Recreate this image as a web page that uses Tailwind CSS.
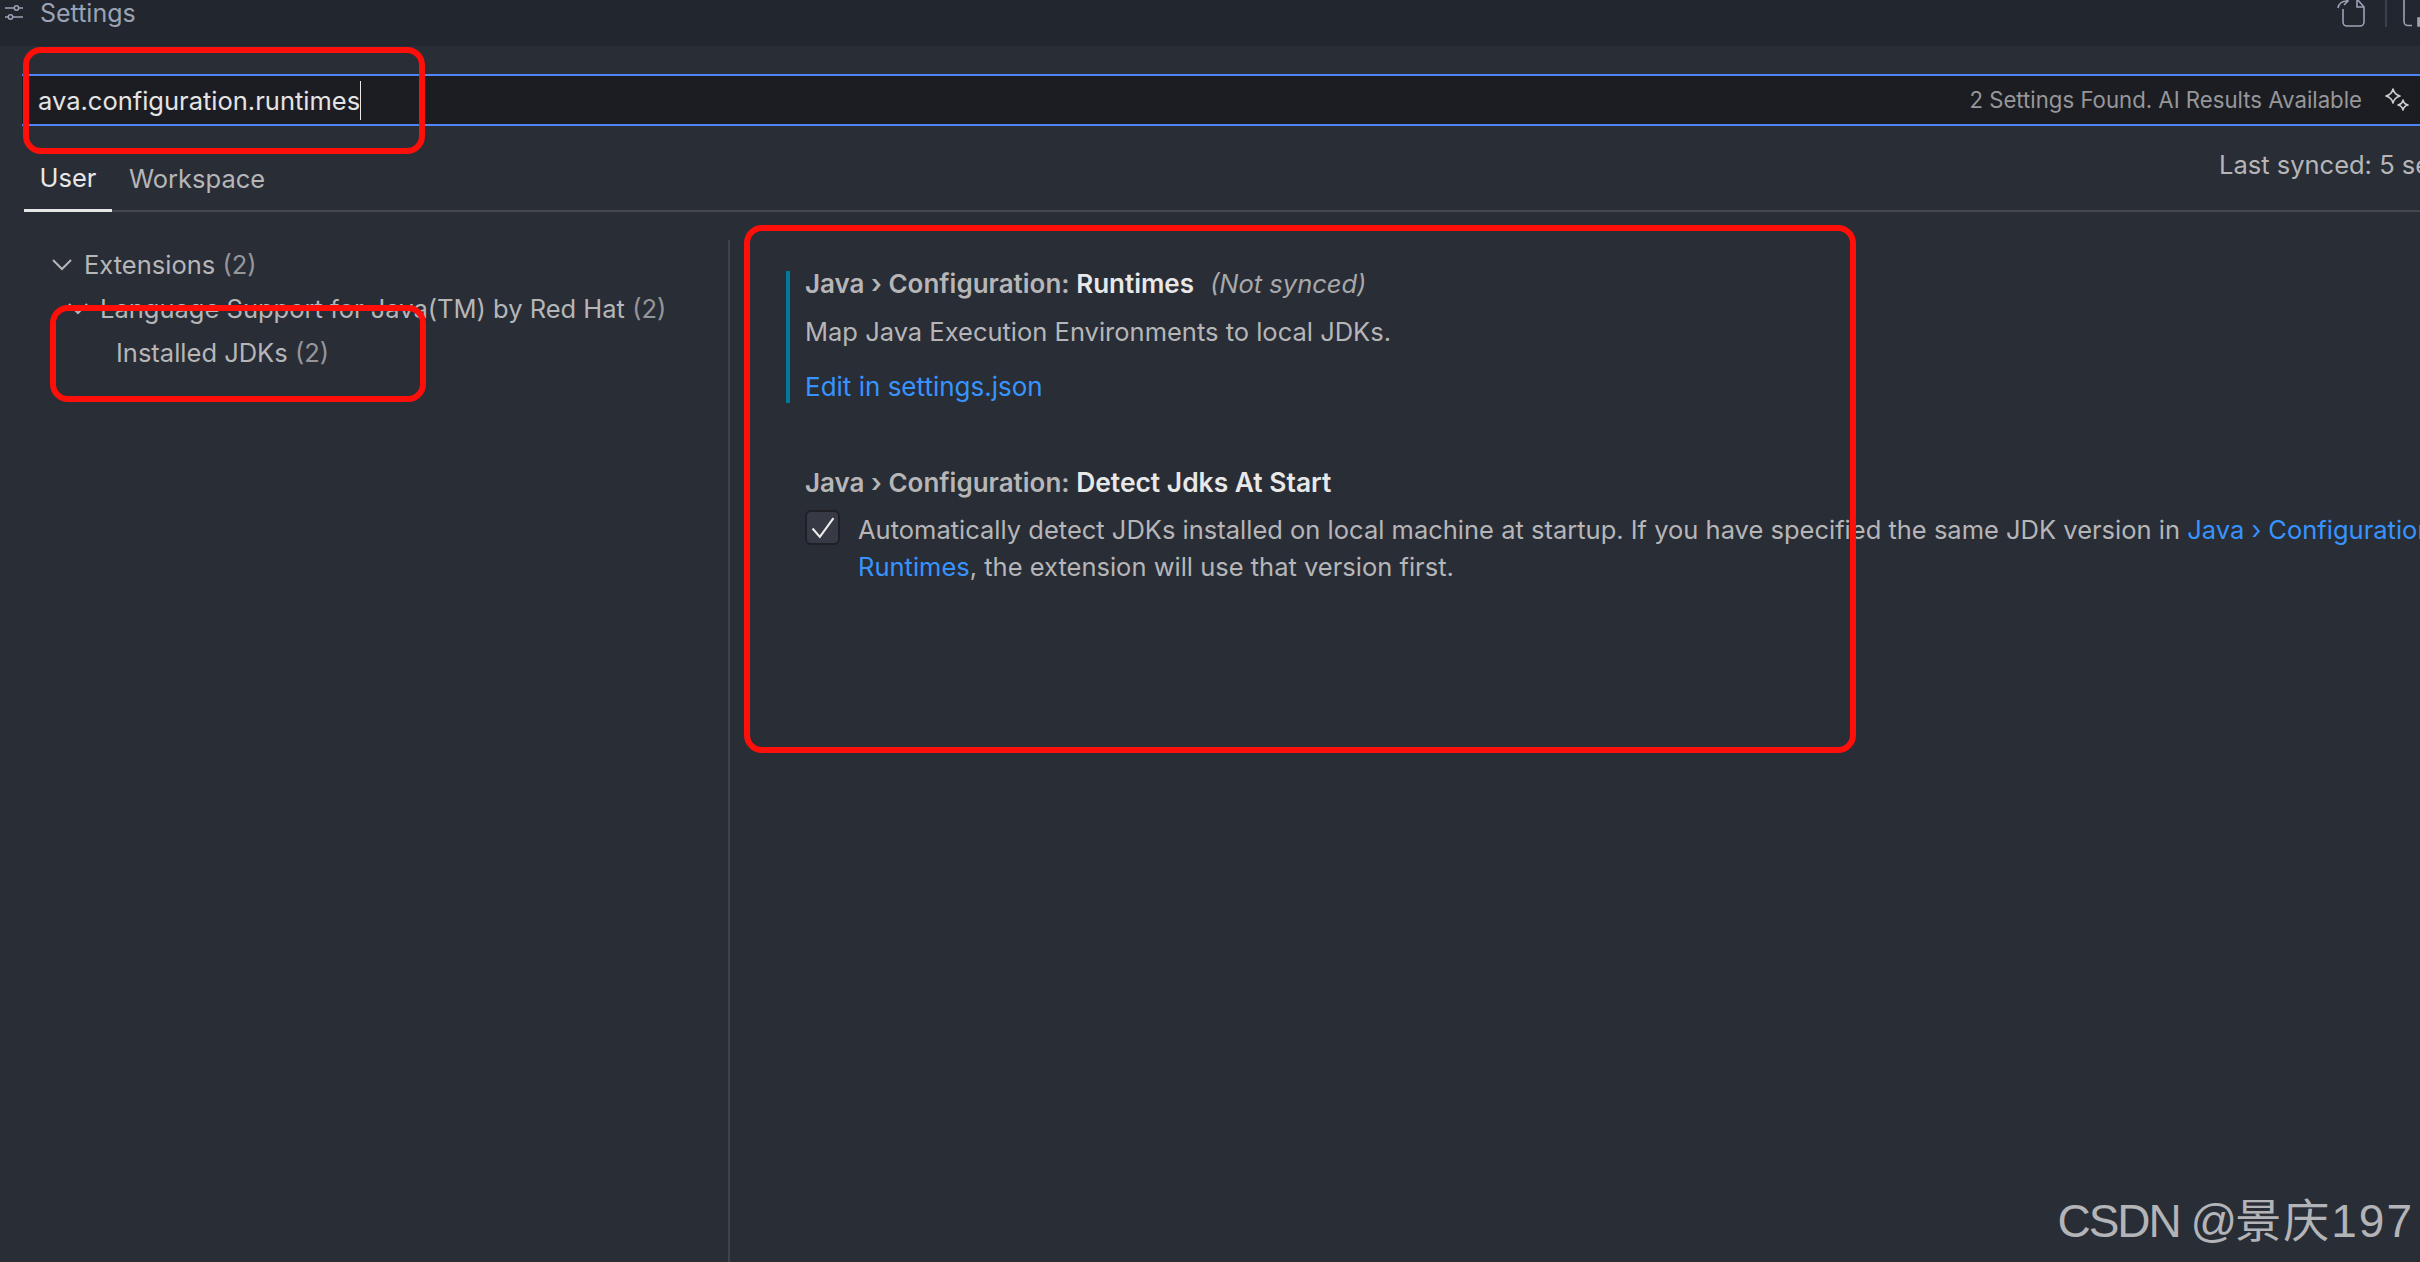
<!DOCTYPE html>
<html lang="en">
<head>
    <meta charset="UTF-8">
    <meta name="viewport" content="width=device-width, initial-scale=1.0">
    <title>Settings</title>
    <script src="https://cdn.jsdelivr.net/npm/@tailwindcss/browser@4"></script>
</head>
<body class="relative w-[2420px] h-[1262px] overflow-hidden bg-[#292d36] font-['Inter','Noto_Sans_CJK_SC',sans-serif] text-[25.5px] text-[#b6b6b8]">

    <!-- title bar -->
    <div class="flex h-[46px] items-start bg-[#22262e]">
        <svg class="ml-[4px] mt-[4px] w-[20px] h-[18px]" viewBox="0 0 20 18" fill="none" stroke="#9aa3b5" stroke-width="1.5">
            <path d="M1 4h9M15 4h4M1 13h3M9 13h10"/>
            <circle cx="12.5" cy="4" r="2.2"/>
            <circle cx="6.5" cy="13" r="2.2"/>
        </svg>
        <span class="ml-[16px] leading-[26px] text-[25px] text-[#9aa3b5]">Settings</span>
        <div class="ml-auto flex items-start">
            <svg class="w-[28px] h-[27px]" viewBox="0 0 28 27" fill="none" stroke="#9aa3b5" stroke-width="1.6">
                <path d="M6 9v13a4 4 0 0 0 4 4h13a4 4 0 0 0 4-4V7l-7-8h-7"/>
                <path d="M20-1v8h7"/>
                <path d="M1 8c1-5 4-7 9-7M7-3l4 4-4 4"/>
            </svg>
            <div class="ml-[20px] w-[2px] h-[27px] bg-[#3c404a]"></div>
            <svg class="ml-[15px] w-[18px] h-[27px]" viewBox="0 0 18 27" fill="none" stroke="#9aa3b5" stroke-width="1.6">
                <path d="M10 25.5H6a4 4 0 0 1-4-4V0"/>
                <path d="M16 18h4v8h-4z" fill="#9aa3b5"/>
            </svg>
        </div>
    </div>

    <!-- search box -->
    <div class="mt-[28px] ml-[22px] flex h-[52px] items-center border-y-2 border-[#4f86f5] bg-[#1c1d22] pl-[16px] pr-[10px]">
        <span class="border-r border-[#e8e8e8] pt-[1px] leading-[38px] text-[#e4e4e4]">ava.configuration.runtimes</span>
        <span class="ml-auto text-[22.2px] text-[#97979a]">2 Settings Found. AI Results Available</span>
        <svg class="ml-[22px] w-[26px] h-[26px]" viewBox="0 0 26 26" fill="none" stroke="#cfcfd2" stroke-width="1.6" stroke-linejoin="round">
            <path d="M9 2c1 4 3 6 7 7-4 1-6 3-7 7-1-4-3-6-7-7 4-1 6-3 7-7z"/>
            <path d="M19 13c.6 3 2 4.4 5 5-3 .6-4.4 2-5 5-.6-3-2-4.4-5-5 3-.6 4.4-2 5-5z"/>
        </svg>
    </div>

    <!-- tabs -->
    <div class="ml-[24px] flex h-[86px] items-end border-b-2 border-[#47484d]">
        <div class="-mb-[2px] flex h-[68px] w-[88px] items-center justify-center border-b-[3px] border-[#e6e6e6] pt-[4px] text-[#e8e8e8]">User</div>
        <div class="-mb-[2px] ml-[17px] flex h-[68px] items-center pt-[2px] text-[#b6b6b8]">Workspace</div>
        <div class="ml-auto self-start mt-[24px] w-[201px] whitespace-nowrap leading-[30px]">Last synced: 5 secs ago</div>
    </div>

    <div class="flex">
        <!-- settings tree -->
        <div class="w-[728px] shrink-0 pt-[31px]">
            <div class="flex h-[44px] items-center pl-[52px]">
                <svg class="w-[20px] h-[12px]" viewBox="0 0 20 12" fill="none" stroke="#b6b6b8" stroke-width="2"><path d="M1 1l9 9 9-9"/></svg>
                <span class="ml-[12px]">Extensions <span class="text-[#96969a]">(2)</span></span>
            </div>
            <div class="flex h-[44px] items-center pl-[68px]">
                <svg class="w-[20px] h-[12px]" viewBox="0 0 20 12" fill="none" stroke="#b6b6b8" stroke-width="2"><path d="M1 1l9 9 9-9"/></svg>
                <span class="ml-[12px]">Language Support for Java(TM) by Red Hat <span class="text-[#96969a]">(2)</span></span>
            </div>
            <div class="flex h-[44px] items-center pl-[116px]">Installed JDKs&nbsp;<span class="text-[#96969a]">(2)</span></div>
        </div>

        <!-- settings list -->
        <div class="mt-[28px] h-[1022px] min-w-0 flex-1 border-l-2 border-[#3f424a] pl-[56px] pt-[31px]">
            <div class="border-l-4 border-[#007a9c] pl-[15px] pb-[3px]">
                <div class="h-[26px] whitespace-nowrap text-[26px] leading-[26px] font-semibold">Java › Configuration: <span class="text-[#e8e8e8]">Runtimes</span><span class="ml-[16px] text-[25.5px] font-normal italic text-[#a8a8aa]">(Not synced)</span></div>
                <div class="mt-[22px] h-[26px] leading-[26px]">Map Java Execution Environments to local JDKs.</div>
                <a class="mt-[29px] block h-[26px] text-[26px] leading-[26px] text-[#3794ff]">Edit in settings.json</a>
            </div>
            <div class="mt-[66px] pl-[19px]">
                <div class="h-[26px] text-[26px] leading-[26px] font-semibold">Java › Configuration: <span class="text-[26.4px] text-[#e8e8e8]">Detect Jdks At Start</span></div>
                <div class="mt-[15px] flex">
                    <div class="flex h-[35px] w-[35px] shrink-0 items-center justify-center rounded-[6px] border-2 border-[#1f2025] bg-[#373a44]">
                        <svg class="w-[26px] h-[23px]" viewBox="0 0 24 22" fill="none" stroke="#ededed" stroke-width="2"><path d="M2 12l7 8L22 2"/></svg>
                    </div>
                    <div class="ml-[18px] whitespace-nowrap pt-[1px] leading-[37px]">
                        <div>Automatically detect JDKs installed on local machine at startup. If you have specified the same JDK version in <span class="text-[#3794ff]">Java › Configuration:</span></div>
                        <div><span class="text-[#3794ff]">Runtimes</span>, the extension will use that version first.</div>
                    </div>
                </div>
            </div>
        </div>
    </div>

    <!-- hand-drawn annotation boxes -->
    <div class="absolute left-[23px] top-[47px] h-[107px] w-[402px] rounded-[18px] border-[6px] border-[#ff0f0a]"></div>
    <div class="absolute left-[50px] top-[305px] h-[97px] w-[376px] rounded-[18px] border-[6px] border-[#ff0f0a]"></div>
    <div class="absolute left-[744px] top-[225px] h-[528px] w-[1112px] rounded-[18px] border-[6px] border-[#ff0f0a]"></div>

    <!-- watermark -->
    <div class="absolute right-[6px] top-[1194px] whitespace-nowrap font-['Liberation_Sans','Noto_Sans_CJK_SC',sans-serif] text-[46px] leading-[54px] text-[#b3b4b7]"><span class="tracking-[-2px]">CSDN @</span><span class="tracking-[2px]">景庆197</span></div>
</body>
</html>
